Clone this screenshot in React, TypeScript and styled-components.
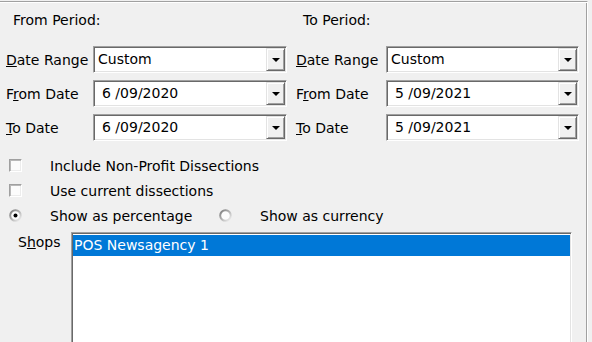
import styled, { createGlobalStyle } from "styled-components";

const GlobalStyle = createGlobalStyle`
  body {
    margin: 0;
    background: #f0f0f0;
    overflow: hidden;
    font-family: "DejaVu Sans", Verdana, sans-serif;
    font-size: 14px;
    color: #000;
  }
`;

const Frame = styled.div`
  box-sizing: border-box;
  width: 588px;
  height: 341px;
  margin-top: 1px;
  overflow: hidden;
  border-top: 1px solid #a0a0a0;
  border-right: 1px solid #fff;
  box-shadow: inset 0 1px 0 #fff, inset -1px 0 0 #a0a0a0;
  display: flex;
  flex-direction: column;
`;

const Periods = styled.div`
  display: flex;
`;

const Column = styled.div<{ $width: number }>`
  width: ${(p) => p.$width}px;
  box-sizing: border-box;
  padding: 10px 0 0 6px;
`;

const Heading = styled.div`
  margin-left: 7px;
  line-height: 16px;
`;

const Fields = styled.div`
  margin-top: 18px;
  display: flex;
  flex-direction: column;
  gap: 7px;
`;

const FieldRow = styled.div<{ $labelWidth: number; $boxWidth: number }>`
  display: grid;
  grid-template-columns: ${(p) => p.$labelWidth}px ${(p) => p.$boxWidth}px;
  align-items: center;
  height: 27px;
`;

const Label = styled.label`
  line-height: 16px;
  white-space: nowrap;
`;

const Combo = styled.div`
  box-sizing: border-box;
  height: 27px;
  padding: 1px;
  display: flex;
  background: #fff;
  border: 1px solid;
  border-color: #a0a0a0 #fff #fff #a0a0a0;
  box-shadow: inset 1px 1px 0 #696969, inset -1px -1px 0 #e3e3e3;
`;

const Value = styled.div<{ $indent: number }>`
  flex: 1;
  padding-left: ${(p) => p.$indent}px;
  line-height: 23px;
  white-space: nowrap;
`;

const DropButton = styled.div`
  box-sizing: border-box;
  width: 19px;
  height: 23px;
  background: #f0f0f0;
  border: 1px solid;
  border-color: #e3e3e3 #696969 #696969 #e3e3e3;
  box-shadow: inset 1px 1px 0 #fff, inset -1px -1px 0 #a0a0a0;
  display: flex;
  align-items: center;
  justify-content: center;
`;

const Options = styled.div`
  margin-top: 12px;
  padding-left: 9px;
  display: flex;
  flex-direction: column;
`;

const OptionRow = styled.div`
  display: flex;
  height: 25px;
  align-items: center;
`;

const Choice = styled.div<{ $width?: number }>`
  display: flex;
  align-items: center;
  width: ${(p) => (p.$width ? `${p.$width}px` : "auto")};
`;

const Indicator = styled.div`
  width: 13px;
  height: 13px;
  flex: none;
`;

const CheckBox = styled(Indicator)`
  box-sizing: border-box;
  background: #fcfcfc;
  border: 1px solid;
  border-color: #a0a0a0 #fff #fff #a0a0a0;
  box-shadow: inset 1px 1px 0 #b9b9b9, inset -1px -1px 0 #ececec;
`;

const ChoiceText = styled.span`
  margin-left: 28px;
  line-height: 16px;
  white-space: nowrap;
`;

const ShopsRow = styled.div`
  margin-top: 4px;
  padding-left: 18px;
  display: flex;
`;

const ShopsLabel = styled(Label)`
  width: 53px;
  margin-top: 2px;
`;

const ListBox = styled.div`
  box-sizing: border-box;
  width: 501px;
  height: 140px;
  flex: none;
  padding: 2px 1px 0 1px;
  background: #fff;
  border: 1px solid;
  border-color: #a0a0a0 #fff #fff #a0a0a0;
  box-shadow: inset 1px 1px 0 #696969, inset -1px -1px 0 #e3e3e3;
`;

const ListItem = styled.div<{ $selected?: boolean }>`
  height: 21px;
  line-height: 21px;
  padding-left: 1px;
  background: ${(p) => (p.$selected ? "#0078d7" : "transparent")};
  color: ${(p) => (p.$selected ? "#fff" : "#000")};
  white-space: nowrap;
`;

function Arrow() {
  return (
    <svg width="8" height="4" viewBox="0 0 8 4">
      <polygon points="0,0 8,0 4,4" fill="#000" />
    </svg>
  );
}

function Radio({ checked }: { checked?: boolean }) {
  return (
    <Indicator>
      <svg width="13" height="13" viewBox="0 0 13 13">
        <defs>
          <linearGradient id="rim" x1="0" y1="0" x2="1" y2="1">
            <stop offset="0" stopColor="#7a7a7a" />
            <stop offset="0.5" stopColor="#b4b4b4" />
            <stop offset="1" stopColor="#f4f4f4" />
          </linearGradient>
        </defs>
        <circle cx="6.5" cy="6.5" r="5.3" fill="#fcfcfc" stroke="url(#rim)" strokeWidth="2" />
        {checked && <circle cx="6.5" cy="6.5" r="2" fill="#000" />}
      </svg>
    </Indicator>
  );
}

type Field = { label: React.ReactNode; value: string; indent: number };

function PeriodColumn({
  title,
  fields,
  width,
  labelWidth,
  boxWidth,
}: {
  title: string;
  fields: Field[];
  width: number;
  labelWidth: number;
  boxWidth: number;
}) {
  return (
    <Column $width={width}>
      <Heading>{title}</Heading>
      <Fields>
        {fields.map((f, i) => (
          <FieldRow key={i} $labelWidth={labelWidth} $boxWidth={boxWidth}>
            <Label>{f.label}</Label>
            <Combo>
              <Value $indent={f.indent}>{f.value}</Value>
              <DropButton>
                <Arrow />
              </DropButton>
            </Combo>
          </FieldRow>
        ))}
      </Fields>
    </Column>
  );
}

const fieldLabels = [
  <>
    <u>D</u>ate Range
  </>,
  <>
    F<u>r</u>om Date
  </>,
  <>
    <u>T</u>o Date
  </>,
];

export default function App() {
  const fromFields: Field[] = [
    { label: fieldLabels[0], value: "Custom", indent: 3 },
    { label: fieldLabels[1], value: "6 /09/2020", indent: 7 },
    { label: fieldLabels[2], value: "6 /09/2020", indent: 7 },
  ];
  const toFields: Field[] = [
    { label: fieldLabels[0], value: "Custom", indent: 3 },
    { label: fieldLabels[1], value: "5 /09/2021", indent: 7 },
    { label: fieldLabels[2], value: "5 /09/2021", indent: 7 },
  ];

  return (
    <>
      <GlobalStyle />
      <Frame>
        <Periods>
          <PeriodColumn title="From Period:" fields={fromFields} width={290} labelWidth={87} boxWidth={194} />
          <PeriodColumn title="To Period:" fields={toFields} width={296} labelWidth={90} boxWidth={193} />
        </Periods>
        <Options>
          <OptionRow>
            <Choice>
              <CheckBox />
              <ChoiceText>Include Non-Profit Dissections</ChoiceText>
            </Choice>
          </OptionRow>
          <OptionRow>
            <Choice>
              <CheckBox />
              <ChoiceText>Use current dissections</ChoiceText>
            </Choice>
          </OptionRow>
          <OptionRow>
            <Choice $width={210}>
              <Radio checked />
              <ChoiceText>Show as percentage</ChoiceText>
            </Choice>
            <Choice>
              <Radio />
              <ChoiceText>Show as currency</ChoiceText>
            </Choice>
          </OptionRow>
        </Options>
        <ShopsRow>
          <ShopsLabel>
            S<u>h</u>ops
          </ShopsLabel>
          <ListBox>
            <ListItem $selected>POS Newsagency 1</ListItem>
          </ListBox>
        </ShopsRow>
      </Frame>
    </>
  );
}
